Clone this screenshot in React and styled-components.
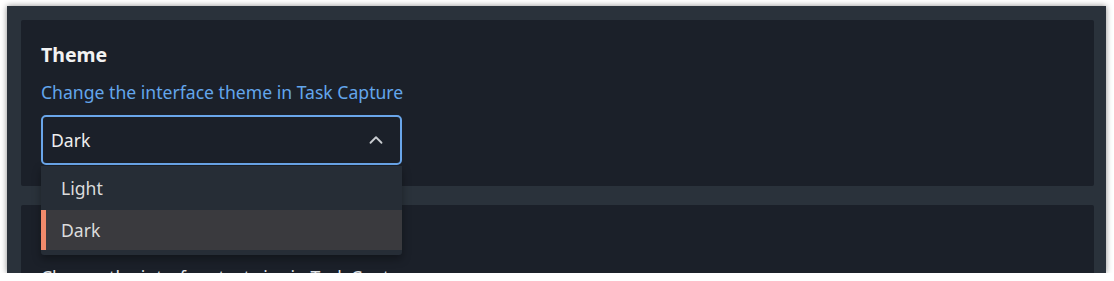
import React, { useState } from "react";
import styled, { createGlobalStyle } from "styled-components";
import { ChevronUp } from "lucide-react";

const GlobalStyle = createGlobalStyle`
  html, body {
    margin: 0;
    padding: 0;
    background: #ffffff;
  }
  body {
    font-family: "Noto Sans", "Open Sans", sans-serif;
  }
`;

const Window = styled.div`
  margin: 6px 8px 0 7px;
  width: 1099px;
  height: 267px;
  box-sizing: border-box;
  padding: 14px 12px 0 14px;
  background: #2a323b;
  box-shadow: 0 0 6px rgba(0, 0, 0, 0.45);
  overflow: hidden;
  display: flex;
  flex-direction: column;
  gap: 19px;
`;

const Card = styled.section`
  background: #1b2029;
  border-radius: 2px;
  padding: 20px 20px 21px;
  flex-shrink: 0;
`;

const Title = styled.h2`
  margin: 0;
  font-size: 19.5px;
  font-weight: 700;
  line-height: 30px;
  color: #f2f2f2;
`;

const Subtitle = styled.p`
  margin: 9px 0 10px;
  font-size: 17.6px;
  line-height: 26px;
  color: ${(p) => (p.$active ? "#63a6ec" : "#e2e4e7")};
`;

const SelectWrap = styled.div`
  position: relative;
  width: 361px;
`;

const SelectBox = styled.button`
  width: 100%;
  height: 50px;
  box-sizing: border-box;
  display: flex;
  align-items: center;
  justify-content: space-between;
  padding: 0 13px 0 8px;
  background: #1b2029;
  border: 2px solid #6aa6ea;
  border-radius: 5px;
  color: #eeeeee;
  font-family: inherit;
  font-size: 17.6px;
  cursor: pointer;
  svg {
    color: #c9ccd0;
  }
`;

const Menu = styled.ul`
  position: absolute;
  top: calc(100% + 1px);
  left: 0;
  right: 0;
  margin: 0;
  padding: 0 0 5px;
  list-style: none;
  background: #262d36;
  border-radius: 0 0 3px 3px;
  box-shadow: 0 4px 8px rgba(0, 0, 0, 0.35);
  z-index: 10;
`;

const Option = styled.li`
  height: ${(p) => (p.$first ? "44px" : "40px")};
  display: flex;
  align-items: center;
  font-size: 17.6px;
  color: #dcdcdc;
  background: ${(p) => (p.$selected ? "#3a3a3e" : "transparent")};
  border-left: 5px solid ${(p) => (p.$selected ? "#f08a6b" : "transparent")};
  padding-left: 15px;
  cursor: pointer;
`;

const options = ["Light", "Dark"];

export default function App() {
  const [value, setValue] = useState("Dark");
  return (
    <>
      <GlobalStyle />
      <Window>
        <Card>
          <Title>Theme</Title>
          <Subtitle $active>Change the interface theme in Task Capture</Subtitle>
          <SelectWrap>
            <SelectBox>
              <span>{value}</span>
              <ChevronUp size={22} strokeWidth={2} />
            </SelectBox>
            <Menu>
              {options.map((o, i) => (
                <Option
                  key={o}
                  $first={i === 0}
                  $selected={o === value}
                  onClick={() => setValue(o)}
                >
                  {o}
                </Option>
              ))}
            </Menu>
          </SelectWrap>
        </Card>
        <Card>
          <Title>Text Size</Title>
          <Subtitle>Change the interface text size in Task Capture</Subtitle>
        </Card>
      </Window>
    </>
  );
}
